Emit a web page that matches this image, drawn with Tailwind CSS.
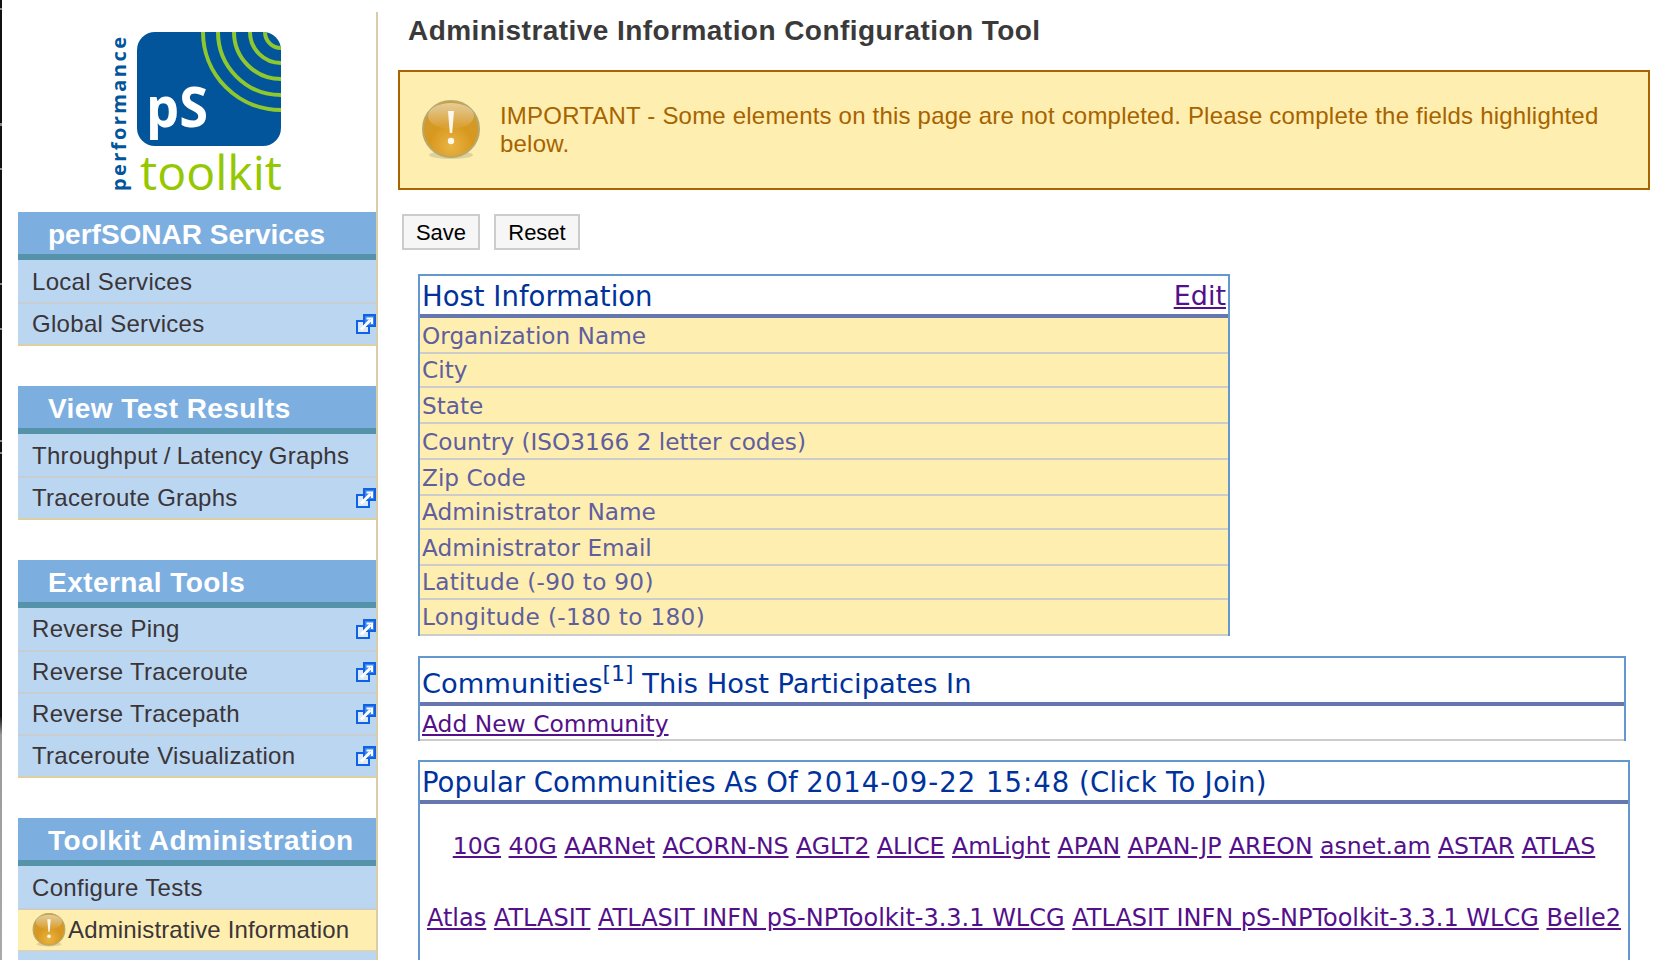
<!DOCTYPE html>
<html lang="en">
<head>
    <meta charset="UTF-8">
    <title>Administrative Information Configuration Tool</title>
    <script src="https://cdn.jsdelivr.net/npm/@tailwindcss/browser@4"></script>
</head>
<body class="h-[960px] overflow-hidden bg-white font-['Liberation_Sans',sans-serif]">
<svg width="0" height="0" class="absolute">
    <defs>
        <radialGradient id="warnFill" cx="50%" cy="80%" r="70%">
            <stop offset="0%" stop-color="#e9b544"/>
            <stop offset="55%" stop-color="#d8981f"/>
            <stop offset="100%" stop-color="#cf9a30"/>
        </radialGradient>
        <linearGradient id="warnShine" x1="0" y1="0" x2="0" y2="1">
            <stop offset="0%" stop-color="#fff" stop-opacity=".5"/>
            <stop offset="100%" stop-color="#fff" stop-opacity=".04"/>
        </linearGradient>
        <symbol id="warn" viewBox="0 0 60 60">
            <ellipse cx="30" cy="55" rx="22" ry="4" fill="#000" opacity=".12"/>
            <circle cx="30" cy="29" r="28" fill="url(#warnFill)" stroke="#b9a868" stroke-width="2"/>
            <ellipse cx="30" cy="16" rx="23" ry="13" fill="url(#warnShine)"/>
            <path d="M27 11 h6 l-1.8 22 h-2.4z" fill="#fff" opacity=".9"/>
            <circle cx="30" cy="41" r="3.2" fill="#fff" opacity=".9"/>
        </symbol>
        <symbol id="ext" viewBox="0 0 20 20">
            <rect x="1" y="7" width="12" height="12" fill="#dce9f8" stroke="#0f62e6" stroke-width="2"/>
            <rect x="8" y="1" width="11" height="11" fill="#3f86ea" stroke="#0f62e6" stroke-width="2"/>
            <path d="M5 15.5 L14.5 6" stroke="#fff" stroke-width="3"/>
            <path d="M10.5 4.5 h5.5 v5.5" fill="none" stroke="#fff" stroke-width="2"/>
        </symbol>
    </defs>
</svg>

<div class="flex">
    <div class="w-[2px] h-[960px] shrink-0 bg-[linear-gradient(#111_0,#111_8px,#888_8px,#888_10px,#111_10px,#111_123px,#888_123px,#888_126px,#111_126px,#111_168px,#888_168px,#888_170px,#111_170px,#111_283px,#888_283px,#888_285px,#111_285px,#111_328px,#888_328px,#888_330px,#111_330px,#111_440px,#888_440px,#888_442px,#111_442px,#111_452px,#888_452px,#888_454px,#111_454px,#111_716px,#999_735px,#aaa_960px)]"></div>

    <!-- sidebar -->
    <div class="w-[376px] shrink-0 pl-[16px] pt-[12px]">
        <div class="border-r-2 border-[#d8cda8] h-[948px] overflow-hidden">
            <svg width="358" height="200" viewBox="18 12 358 200" class="block">
                <defs>
                    <clipPath id="logoBox"><rect x="137" y="32" width="144" height="114" rx="18"/></clipPath>
                </defs>
                <rect x="137" y="32" width="144" height="114" rx="18" fill="#02559b"/>
                <g clip-path="url(#logoBox)" fill="none" stroke="#8fc82e" stroke-width="4">
                    <circle cx="281" cy="32" r="16"/>
                    <circle cx="281" cy="32" r="31"/>
                    <circle cx="281" cy="32" r="47"/>
                    <circle cx="281" cy="32" r="63"/>
                    <circle cx="281" cy="32" r="78"/>
                </g>
                <text x="146" y="127" fill="#fff" font-family="Open Sans" font-weight="700" font-size="56" textLength="62" lengthAdjust="spacingAndGlyphs">pS</text>
                <text x="140" y="190" fill="#94c800" font-family="Open Sans" font-size="47" textLength="142" lengthAdjust="spacingAndGlyphs">toolkit</text>
                <text transform="translate(126,191) rotate(-90)" fill="#02559b" font-family="Open Sans" font-weight="700" font-size="20" textLength="154">performance</text>
            </svg>

            <div class="h-[42px] bg-[#7caee0] pl-[30px] text-[28px] leading-[46px] font-bold text-white">perfSONAR Services</div>
            <div class="h-[6px] bg-[#5593aa]"></div>
            <div class="border-b-2 border-[#ddd0a0] bg-[#bad6f1] text-[24px] tracking-[0.3px] text-[#3b3538]">
                <div class="h-[44px] pl-[14px] leading-[44px] border-b-2 border-[#c8cdd2]">Local Services</div>
                <div class="h-[40px] pl-[14px] flex justify-between items-center">Global Services<svg class="w-[20px] h-[20px]"><use href="#ext"/></svg></div>
            </div>

            <div class="mt-[40px] h-[42px] bg-[#7caee0] pl-[30px] text-[28px] leading-[46px] tracking-[0.43px] font-bold text-white">View Test Results</div>
            <div class="h-[6px] bg-[#5593aa]"></div>
            <div class="border-b-2 border-[#ddd0a0] bg-[#bad6f1] text-[24px] tracking-[0.3px] text-[#3b3538]">
                <div class="h-[44px] pl-[14px] leading-[44px] border-b-2 border-[#c8cdd2] [word-spacing:-1px]">Throughput / Latency Graphs</div>
                <div class="h-[40px] pl-[14px] flex justify-between items-center">Traceroute Graphs<svg class="w-[20px] h-[20px]"><use href="#ext"/></svg></div>
            </div>

            <div class="mt-[40px] h-[42px] bg-[#7caee0] pl-[30px] text-[28px] leading-[46px] tracking-[0.45px] font-bold text-white">External Tools</div>
            <div class="h-[6px] bg-[#5593aa]"></div>
            <div class="border-b-2 border-[#ddd0a0] bg-[#bad6f1] text-[24px] tracking-[0.3px] text-[#3b3538]">
                <div class="h-[44px] pl-[14px] border-b-2 border-[#c8cdd2] flex justify-between items-center">Reverse Ping<svg class="w-[20px] h-[20px]"><use href="#ext"/></svg></div>
                <div class="h-[42px] pl-[14px] border-b-2 border-[#c8cdd2] flex justify-between items-center">Reverse Traceroute<svg class="w-[20px] h-[20px]"><use href="#ext"/></svg></div>
                <div class="h-[42px] pl-[14px] border-b-2 border-[#c8cdd2] flex justify-between items-center">Reverse Tracepath<svg class="w-[20px] h-[20px]"><use href="#ext"/></svg></div>
                <div class="h-[40px] pl-[14px] flex justify-between items-center">Traceroute Visualization<svg class="w-[20px] h-[20px]"><use href="#ext"/></svg></div>
            </div>

            <div class="mt-[40px] h-[42px] bg-[#7caee0] pl-[30px] text-[28px] leading-[46px] tracking-[0.53px] font-bold text-white">Toolkit Administration</div>
            <div class="h-[6px] bg-[#5593aa]"></div>
            <div class="bg-[#bad6f1] text-[24px] tracking-[0.3px] text-[#3b3538]">
                <div class="h-[44px] pl-[14px] leading-[44px] border-b-2 border-[#c8cdd2]">Configure Tests</div>
                <div class="h-[42px] pl-[14px] border-b-2 border-[#d5d3c0] bg-[#feeeb0] flex items-center gap-[2px] tracking-[0.15px]"><svg class="w-[34px] h-[34px] shrink-0"><use href="#warn"/></svg>Administrative Information</div>
                <div class="h-[42px]"></div>
            </div>
        </div>
    </div>

    <!-- main -->
    <div class="w-[1268px] pl-[20px]">
        <h1 class="mt-[14px] ml-[10px] text-[28px] leading-[34px] tracking-[0.45px] font-bold text-[#3a3a3a]">Administrative Information Configuration Tool</h1>

        <div class="mt-[22px] w-[1252px] h-[120px] border-2 border-[#a86400] bg-[#feeeb0] flex items-center pl-[21px] pr-[40px]">
            <svg class="w-[60px] h-[60px] shrink-0"><use href="#warn"/></svg>
            <p class="ml-[19px] text-[24px] leading-[28px] tracking-[0.2px] text-[#a66300]">IMPORTANT - Some elements on this page are not completed. Please complete the fields highlighted below.</p>
        </div>

        <div class="mt-[24px] ml-[4px] flex gap-[14px]">
            <button class="w-[78px] h-[36px] border-2 border-[#ccc] bg-[#f6f6f6] text-[22px] text-black">Save</button>
            <button class="w-[86px] h-[36px] border-2 border-[#ccc] bg-[#f6f6f6] text-[22px] text-black">Reset</button>
        </div>

        <div class="mt-[24px] ml-[20px] w-[812px] border-x-2 border-t-2 border-[#6598ce] font-['DejaVu_Sans',sans-serif] text-[23.2px] text-[#5f5f9f]">
            <div class="h-[38px] pl-[2px] pr-[2px] flex justify-between leading-[40px] text-[27.5px] text-[#00329b]">
                <span>Host Information</span>
                <a href="#" class="underline text-[27px] text-[#54108a]">Edit</a>
            </div>
            <div class="h-[4px] bg-[#6577ae]"></div>
            <div class="bg-[#feeeb0]">
                <div class="h-[36px] pl-[2px] leading-[36px] border-b-2 border-[#ccc]">Organization Name</div>
                <div class="h-[34px] pl-[2px] leading-[32px] border-b-2 border-[#ccc]">City</div>
                <div class="h-[36px] pl-[2px] leading-[36px] border-b-2 border-[#ccc]">State</div>
                <div class="h-[36px] pl-[2px] leading-[36px] border-b-2 border-[#ccc]">Country (ISO3166 2 letter codes)</div>
                <div class="h-[36px] pl-[2px] leading-[36px] border-b-2 border-[#ccc]">Zip Code</div>
                <div class="h-[34px] pl-[2px] leading-[32px] border-b-2 border-[#ccc]">Administrator Name</div>
                <div class="h-[36px] pl-[2px] leading-[36px] border-b-2 border-[#ccc]">Administrator Email</div>
                <div class="h-[34px] pl-[2px] leading-[32px] tracking-[0.27px] border-b-2 border-[#ccc]">Latitude (-90 to 90)</div>
                <div class="h-[36px] pl-[2px] leading-[34px] tracking-[0.32px] border-b-2 border-[#ccc]">Longitude (-180 to 180)</div>
            </div>
        </div>

        <div class="mt-[20px] ml-[20px] w-[1208px] border-x-2 border-t-2 border-[#6598ce] font-['DejaVu_Sans',sans-serif]">
            <div class="h-[44px] pl-[2px] leading-[52px] text-[27.3px] text-[#00329b]">Communities<sup class="text-[22px] relative -top-[12px]">[1]</sup> This Host Participates In</div>
            <div class="h-[4px] bg-[#6577ae]"></div>
            <div class="h-[35px] pl-[2px] leading-[37px] border-b-2 border-[#ccc] text-[23.4px]"><a href="#" class="underline text-[#54108a]">Add New Community</a></div>
        </div>

        <div class="mt-[19px] ml-[20px] w-[1212px] h-[220px] border-x-2 border-t-2 border-[#6598ce] font-['DejaVu_Sans',sans-serif]">
            <div class="h-[38px] pl-[2px] leading-[40px] text-[27.5px] text-[#00329b]">Popular Communities As Of <span class="tracking-[1px]">2014-09-22 15:48</span> <span class="tracking-[0.3px]">(Click To Join)</span></div>
            <div class="h-[4px] bg-[#6577ae]"></div>
            <p class="mt-[6px] text-center text-[24px] leading-[72px] text-[#54108a] px-[4px] [&_a]:underline">
                <span class="text-[23.6px]"><a href="#">10G</a> <a href="#">40G</a> <a href="#">AARNet</a> <a href="#">ACORN-NS</a> <a href="#">AGLT2</a> <a href="#">ALICE</a> <a href="#">AmLight</a> <a href="#">APAN</a> <a href="#">APAN-JP</a> <a href="#">AREON</a> <a href="#">asnet.am</a> <a href="#">ASTAR</a> <a href="#">ATLAS</a></span>
                <a href="#">Atlas</a> <a href="#">ATLASIT</a> <a href="#">ATLASIT INFN pS-NPToolkit-3.3.1 WLCG</a> <a href="#">ATLASIT INFN pS-NPToolkit-3.3.1 WLCG</a> <a href="#">Belle2</a>
            </p>
        </div>
    </div>
</div>
</body>
</html>
